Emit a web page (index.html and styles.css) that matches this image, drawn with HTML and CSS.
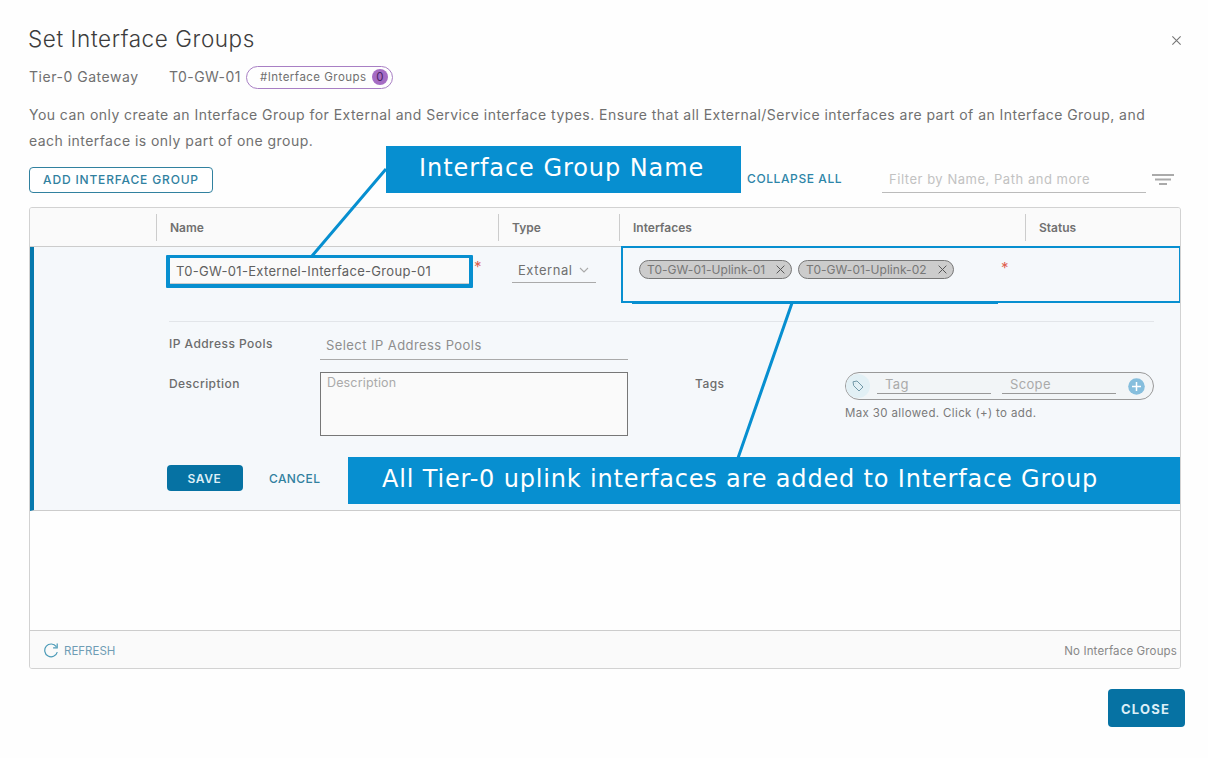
FILE: index.html
```
<!DOCTYPE html>
<html lang="en">
<head>
<meta charset="utf-8">
<title>Set Interface Groups</title>
<link rel="stylesheet" href="styles.css">
</head>
<body>
<main class="dialog">
  <header class="dialog-head">
    <h1 class="title">Set Interface Groups</h1>
    <svg class="close-icon" viewBox="0 0 12 12"><path d="M1.5 1.5l9 9M10.5 1.5l-9 9"/></svg>
  </header>
  <div class="context">
    <span class="context-label">Tier-0 Gateway</span>
    <span class="context-name">T0-GW-01</span>
    <span class="count-pill"><span class="count-text">#Interface Groups</span><span class="count">0</span></span>
  </div>
  <p class="intro"><span class="intro-a">You can only create an Interface Group for External and Service interface types. Ensure that all External/Service interfaces are part of an Interface Group, and</span><br><span class="intro-b">each interface is only part of one group.</span></p>
  <div class="toolbar">
    <button class="btn-outline">ADD INTERFACE GROUP</button>
    <span class="collapse">COLLAPSE ALL</span>
    <span class="filter">Filter by Name, Path and more</span>
    <svg class="filter-icon" viewBox="0 0 22 12"><path d="M0 1h22M3 5.5h16M7 10h8"/></svg>
  </div>
  <section class="grid">
    <div class="grid-head">
      <span class="col"></span><span class="col col-name">Name</span><span class="col col-type">Type</span><span class="col col-if">Interfaces</span><span class="col col-status">Status</span>
    </div>
    <div class="edit-row">
      <div class="line-main">
        <div class="name-field"><span class="name-value">T0-GW-01-Externel-Interface-Group-01</span></div>
        <span class="req">*</span>
        <div class="type-field"><span class="type-value">External</span><svg class="caret" viewBox="0 0 10 6"><path d="M1 1l4 4 4-4"/></svg></div>
        <div class="if-cell">
          <div class="chips">
            <span class="chip">T0-GW-01-Uplink-01<svg class="chip-x" viewBox="0 0 10 10"><path d="M.7.7l8.6 8.6M9.3.7L.7 9.3"/></svg></span>
            <span class="chip chip-second">T0-GW-01-Uplink-02<svg class="chip-x" viewBox="0 0 10 10"><path d="M.7.7l8.6 8.6M9.3.7L.7 9.3"/></svg></span>
          </div>
          <span class="req req-if">*</span>
        </div>
      </div>
      <div class="details">
        <div class="pools"><span class="label label-pools">IP Address Pools</span><span class="select">Select IP Address Pools</span></div>
        <div class="desc-line">
          <span class="label label-desc">Description</span>
          <div class="textarea">Description</div>
          <span class="label label-tags">Tags</span>
          <div class="tags">
            <div class="tag-box">
              <span class="tag-badge"><svg class="tag-icon" viewBox="0 0 12 12"><path d="M1 1.8 5 1l6 6-4 4-5.3-5.3z"/><path d="M3.2 3.3h.2"/></svg></span>
              <span class="tag-input">Tag</span>
              <span class="tag-input tag-scope">Scope</span>
              <svg class="plus" viewBox="0 0 17 17"><circle cx="8.5" cy="8.5" r="8.3"/><path d="M8.5 4v9M4 8.5h9"/></svg>
            </div>
            <div class="tag-hint">Max 30 allowed. Click (+) to add.</div>
          </div>
        </div>
      </div>
      <div class="actions"><button class="btn-save">SAVE</button><span class="cancel">CANCEL</span></div>
    </div>
    <div class="empty"></div>
    <footer class="grid-foot">
      <svg class="refresh-icon" viewBox="0 0 15 15"><path d="M13.8 9.2A6.4 6.4 0 1 1 12.8 3.6M13.7.6v4.2H9.6"/></svg>
      <span class="refresh">REFRESH</span>
      <span class="total">No Interface Groups</span>
    </footer>
  </section>
  <div class="dialog-foot"><button class="btn-close">CLOSE</button></div>
</main>
<svg class="leaders" viewBox="0 0 1208 758"><path d="M386 169L312 256M792 303L738 458"/></svg>
<div class="callout callout-name"><span class="callout-text">Interface Group Name</span></div>
<div class="callout callout-uplinks"><span class="callout-text callout-text-long">All Tier-0 uplink interfaces are added to Interface Group</span></div>
</body>
</html>
```
FILE: styles.css
```
* { box-sizing: border-box; }
body { margin: 0; width: 1208px; height: 758px; overflow: hidden; background: #fefefe; color: #707070; font-family: Inter, "Liberation Sans", sans-serif; font-size: 13px; position: relative; }
button { font-family: inherit; padding: 0; }
svg { fill: none; flex: none; }
.dialog { padding: 24px 23px 0 29px; }
.dialog span { white-space: nowrap; }
.dialog-head { display: flex; justify-content: space-between; height: 30px; padding-right: 3px; }
.title { margin: 0 0 0 -1px; font-size: 22.5px; font-weight: 300; line-height: 30px; color: #3c3c3c; letter-spacing: .58px; }
.close-icon { width: 11px; height: 11px; margin-top: 11px; stroke: #777; stroke-width: 1.2; }
.context { display: flex; align-items: center; height: 24px; margin-top: 11px; font-size: 14px; }
.context-label { width: 140px; margin-top: -2px; letter-spacing: .53px; }
.context-name { width: 77px; margin-top: -2px; letter-spacing: .45px; }
.count-pill { display: flex; align-items: center; justify-content: space-between; width: 147px; height: 23px; border: 1px solid #a87fc4; border-radius: 12px; padding: 0 4px 0 13px; font-size: 11.5px; }
.count-text { letter-spacing: .47px; }
.count { width: 16px; height: 16px; border-radius: 50%; background: #a56cc4; color: #4b2466; text-align: center; line-height: 16px; }
.intro { margin: 13px 0 0; height: 52px; font-size: 14px; line-height: 26px; letter-spacing: .457px; }
.toolbar { display: flex; height: 26px; margin-top: 13px; }
.btn-outline { width: 184px; height: 26px; border: 1px solid #31819f; border-radius: 4px; background: #fff; color: #31819f; font-size: 12px; font-weight: 500; letter-spacing: .83px; padding-bottom: 2px; }
.collapse { width: 135px; margin-left: 534px; line-height: 23px; font-size: 12px; font-weight: 500; color: #2d85a8; letter-spacing: .6px; }
.filter { width: 264px; height: 26px; border-bottom: 1px solid #bbb; padding-left: 7px; line-height: 24px; color: #c2c2c2; font-size: 13px; letter-spacing: .53px; }
.filter-icon { width: 22px; height: 12px; margin: 7px 0 0 6px; stroke: #aaa; stroke-width: 2; }
.grid { width: 1152px; height: 462px; margin-top: 14px; border: 1px solid #d2d2d2; border-radius: 3px; overflow: hidden; background: #fefefe; }
.grid-head { display: grid; grid-template-columns: 126px 342px 121px 406px 1fr; align-items: center; height: 39px; background: #fafafa; border-bottom: 1px solid #ccc; }
.col { height: 27px; line-height: 27px; border-left: 1px solid #ccc; padding-left: 13px; font-size: 12px; font-weight: 600; color: #707070; }
.col:first-child { border: 0; }
.edit-row { height: 264px; background: #f5f8fb; border-bottom: 1px solid #ccc; border-left: 4px solid #0679ae; }
.line-main { display: flex; height: 74px; margin-left: 135px; background: linear-gradient(#078fd0, #078fd0) no-repeat 463px 56px / 366px 1px; }
.name-field { flex: none; width: 307px; height: 33px; margin: 8px 0 0 -3px; border: 4px solid #078fd0; border-top-width: 3px; border-radius: 1px; background: #fafafa; padding-left: 6px; line-height: 27px; font-size: 13px; color: #606060; box-shadow: inset 0 -1px #ccc; }
.name-value { letter-spacing: .31px; }
.req { flex: none; width: 39px; padding: 10px 0 0 1px; color: #e0614f; font-size: 15px; }
.type-field { display: flex; flex: none; align-items: center; gap: 6px; width: 84px; height: 24px; margin: 12px 25px 0 0; padding: 0 0 2px 6px; border-bottom: 1px solid #aaa; font-size: 13px; }
.type-value { letter-spacing: .55px; }
.caret { width: 10px; height: 6px; stroke: #aaa; stroke-width: 1.1; }
.if-cell { display: flex; flex: none; width: 559px; height: 57px; border: 2px solid #078fd0; border-right-width: 1px; margin-top: -1px; padding: 12px 0 0 16px; }
.chips { display: flex; gap: 6px; width: 362px; }
.chip { display: flex; align-items: center; justify-content: space-between; width: 153px; height: 19px; border: 1px solid #777; border-radius: 10px; background: #ccc; padding: 0 6px 0 7px; font-size: 12px; color: #777; letter-spacing: .05px; }
.chip-second { width: 156px; }
.chip-x { width: 9px; height: 9px; stroke: #555; stroke-width: 1.1; }
.req-if { padding: 0; line-height: 16px; }
.details { margin: 0 26px 0 135px; height: 136px; border-top: 1px solid #e2e5e9; }
.label { color: #6c6c6c; font-size: 12px; font-weight: 500; letter-spacing: .45px; }
.pools { display: flex; height: 38px; }
.label-pools { width: 151px; line-height: 44px; }
.select { width: 308px; height: 38px; border-bottom: 1px solid #aaa; padding-left: 6px; line-height: 46px; color: #8e8e8e; font-size: 13px; letter-spacing: .43px; }
.desc-line { display: flex; margin-top: 12px; }
.label-desc { width: 151px; line-height: 23px; }
.textarea { width: 308px; height: 64px; border: 1px solid #777; background: #fafafa; padding-left: 6px; line-height: 20px; color: #aaa; font-size: 12.5px; letter-spacing: .15px; }
.label-tags { width: 150px; margin-left: 67px; line-height: 23px; }
.tag-box { display: flex; align-items: center; width: 309px; height: 28px; border: 1px solid #999; border-radius: 14px; background: #f2f5f7; }
.tag-badge { display: flex; align-items: center; justify-content: center; width: 24px; height: 24px; margin-right: 7px; border-radius: 50%; background: #e2f0f5; }
.tag-icon { width: 12px; height: 12px; stroke: #7299a8; stroke-width: 1; }
.tag-input { width: 114px; height: 21px; margin-bottom: 5px; padding-left: 8px; border-bottom: 1px solid #999; line-height: 22px; color: #aaa; font-size: 13px; letter-spacing: .35px; }
.tag-scope { margin-left: 11px; }
.plus { width: 17px; height: 17px; margin-left: 12px; fill: #86bedd; stroke: #fff; stroke-width: 1.5; }
.plus circle { stroke: none; }
.tag-hint { margin-top: 5px; line-height: 16px; font-size: 11.5px; white-space: nowrap; color: #7a7a7a; letter-spacing: .37px; }
.actions { display: flex; margin: 8px 0 0 133px; }
.btn-save { width: 76px; height: 26px; border: 0; border-radius: 4px; background: #0672a3; color: #dceff7; font-size: 12px; font-weight: 600; letter-spacing: .6px; padding-right: 1px; }
.cancel { margin-left: 26px; line-height: 27px; font-size: 12px; font-weight: 500; color: #31819f; letter-spacing: .4px; }
.empty { height: 119px; }
.grid-foot { display: flex; align-items: center; height: 38px; padding: 1px 3px 0 13px; background: #fafafa; border-top: 1px solid #ccc; }
.refresh-icon { width: 16px; height: 15px; stroke: #4c9bb8; stroke-width: 1.2; }
.refresh { margin-left: 5px; padding-top: 1px; font-size: 11.5px; color: #6f9db5; }
.total { margin-left: auto; padding-top: 1px; font-size: 11.5px; color: #888; letter-spacing: .14px; }
.dialog-foot { display: flex; justify-content: flex-end; margin-top: 20px; }
.btn-close { width: 77px; height: 38px; border: 0; border-radius: 4px; background: #0672a3; color: #dceff7; font-size: 13px; font-weight: 700; letter-spacing: 1.2px; padding: 1px 2px 0 0; }
.leaders { position: absolute; left: 0; top: 0; width: 1208px; height: 758px; stroke: #078fd0; stroke-width: 3; }
.callout { position: absolute; display: flex; align-items: center; background: #078fd0; color: #fff; font-family: "DejaVu Sans", sans-serif; font-size: 24px; white-space: nowrap; }
.callout-name { left: 386px; top: 146px; width: 355px; height: 47px; padding: 0 0 4px 33px; letter-spacing: .93px; }
.callout-uplinks { left: 348px; top: 457px; width: 832px; height: 47px; padding: 0 0 4px 34px; letter-spacing: .82px; }
```
